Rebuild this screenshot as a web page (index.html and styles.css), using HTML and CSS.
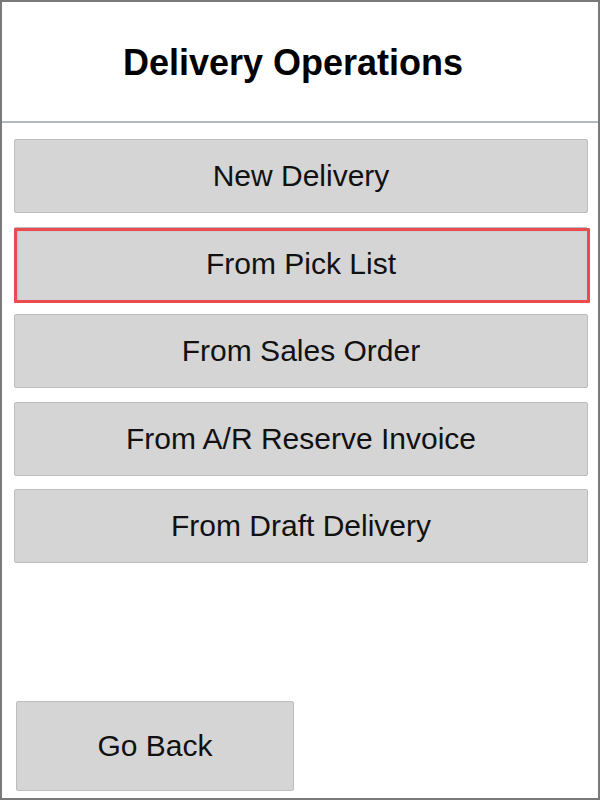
FILE: index.html
```html
<!DOCTYPE html>
<html>
<head>
<meta charset="utf-8">
<link rel="stylesheet" href="styles.css">
</head>
<body>
<div class="frame">
  <header class="header"><h1 class="title">Delivery Operations</h1></header>
  <div class="menu">
    <div class="btn">New Delivery</div>
    <div class="btn btn-selected">From Pick List</div>
    <div class="btn">From Sales Order</div>
    <div class="btn">From A/R Reserve Invoice</div>
    <div class="btn">From Draft Delivery</div>
  </div>
  <div class="footer">
    <div class="btn btn-back">Go Back</div>
  </div>
</div>
</body>
</html>
```
FILE: styles.css
```css
html, body { margin: 0; padding: 0; background: #fff; }
.frame {
  width: 600px; height: 800px; box-sizing: border-box;
  border: 2px solid #7a7a7a;
  display: flex; flex-direction: column;
  font-family: "Liberation Sans", Arial, sans-serif;
}
.header {
  height: 121px; box-sizing: border-box;
  padding: 2px 14px 0 0;
  border-bottom: 2px solid #b4b8c0;
  display: flex; align-items: center; justify-content: center;
}
.title {
  margin: 0; font-family: "Liberation Sans", Arial, sans-serif;
  font-weight: bold; font-size: 36px; color: #000;
}
.menu {
  padding: 16px 10px 0 12px;
  display: flex; flex-direction: column; gap: 13.5px;
}
.btn {
  height: 74px; box-sizing: border-box;
  background: #d5d5d5; border: 1px solid #bdbdbd; border-radius: 2px;
  display: flex; align-items: center; justify-content: center;
  font-size: 30px; color: #111;
}
.btn-selected {
  position: relative;
  box-shadow: inset 2px 2px 3px rgba(0,0,0,0.22);
}
.btn-selected::after {
  content: "";
  position: absolute;
  left: -1px; top: 0; right: -3px; bottom: -3px;
  border: 3px solid #e94b4e;
  border-radius: 1px;
}
.footer { margin-top: auto; padding: 0 0 7px 14px; }
.btn-back { width: 278px; height: 90px; }
```
